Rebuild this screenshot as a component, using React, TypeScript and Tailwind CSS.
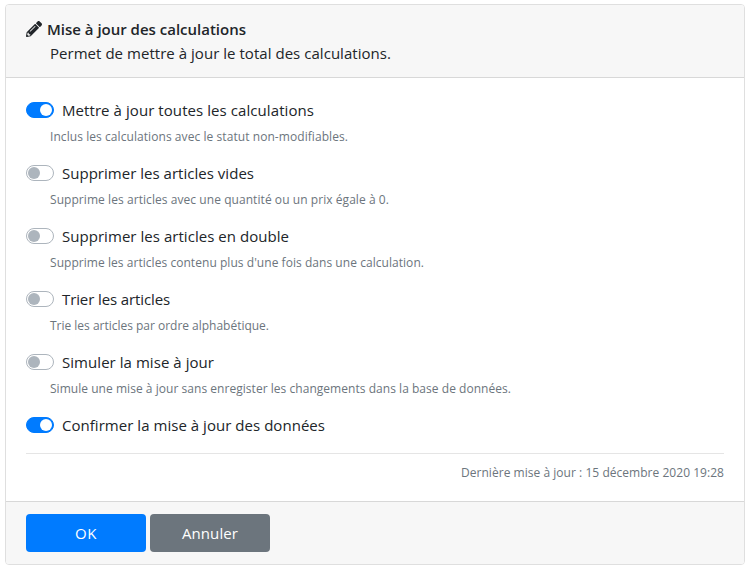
import React from "react";

type Option = { label: string; help?: string; on?: boolean; lw: number; hw?: number };

const options: Option[] = [
  { label: "Mettre à jour toutes les calculations", help: "Inclus les calculations avec le statut non-modifiables.", on: true, lw: 252, hw: 298 },
  { label: "Supprimer les articles vides", help: "Supprime les articles avec une quantité ou un prix égale à 0.", lw: 192, hw: 339 },
  { label: "Supprimer les articles en double", help: "Supprime les articles contenu plus d'une fois dans une calculation.", lw: 227, hw: 374 },
  { label: "Trier les articles", help: "Trie les articles par ordre alphabétique.", lw: 108, hw: 219 },
  { label: "Simuler la mise à jour", help: "Simule une mise à jour sans enregister les changements dans la base de données.", lw: 152, hw: 461 },
  { label: "Confirmer la mise à jour des données", on: true, lw: 263 },
];

/* One line of text fitted to a given width. */
function Fit({ children, width, className = "" }: { children: string; width: number; className?: string }) {
  const ref = React.useRef<HTMLSpanElement>(null);
  React.useLayoutEffect(() => {
    const el = ref.current;
    if (!el) return;
    el.style.letterSpacing = "0px";
    const natural = el.getBoundingClientRect().width;
    el.style.letterSpacing = `${(width - natural) / children.length}px`;
  }, [children, width]);
  return <span ref={ref} className={`inline-block whitespace-nowrap ${className}`}>{children}</span>;
}

function Switch({ on }: { on?: boolean }) {
  return (
    <span className={`flex h-4 w-7 shrink-0 items-center rounded-full border px-px ${on ? "justify-end border-[#007bff] bg-[#007bff]" : "border-[#adb5bd] bg-white"}`}>
      <span className={`size-3 rounded-full ${on ? "bg-white" : "bg-[#adb5bd]"}`} />
    </span>
  );
}

export default function App() {
  return (
    <div className="h-[570px] w-[750px] bg-white pt-1 pl-[5px] font-['Open_Sans','Noto_Sans',sans-serif] text-[#212529]">
      <div className="flex h-[561px] w-[740px] flex-col overflow-hidden rounded border border-[#dfdfdf] bg-white">
        <header className="h-[73px] border-b border-[#d8d8d8] bg-[#f7f7f7] px-5 pt-3">
          <div className="flex h-6 items-center">
            <svg viewBox="0 0 512 512" className="mr-[5px] size-4 fill-[#212529]">
              <path d="M497.9 142.1l-46.1 46.1c-4.7 4.7-12.3 4.7-17 0l-111-111c-4.7-4.7-4.7-12.3 0-17l46.1-46.1c18.7-18.7 49.1-18.7 67.9 0l60.1 60.1c18.8 18.7 18.8 49.1 0 67.9zM284.2 99.8L21.6 362.4.4 483.9c-2.9 16.4 11.4 30.6 27.8 27.8l121.5-21.3 262.6-262.6c4.7-4.7 4.7-12.3 0-17l-111-111c-4.8-4.7-12.4-4.7-17.1 0zM124.1 339.9c-5.5-5.5-5.5-14.3 0-19.8l154-154c5.5-5.5 14.3-5.5 19.8 0s5.5 14.3 0 19.8l-154 154c-5.5 5.5-14.3 5.5-19.8 0zM88 424h48v36.3l-64.5 11.3-31.1-31.1L51.7 376H88v48z" />
            </svg>
            <Fit width={199} className="text-[15px] leading-6 font-semibold">Mise à jour des calculations</Fit>
          </div>
          <div className="pl-6 text-[15px] leading-6"><Fit width={341}>Permet de mettre à jour le total des calculations.</Fit></div>
        </header>
        <main className="h-[423px] px-5 pt-5">
          {options.map((o) => (
            <div key={o.label} className="h-[63px]">
              <div className="flex h-6 items-center gap-2">
                <Switch on={o.on} />
                <Fit width={o.lw} className="text-[15px] leading-6">{o.label}</Fit>
              </div>
              {o.help && <div className="pt-[5px] pl-6 text-[12px] leading-5 text-[#6c757d]"><Fit width={o.hw!}>{o.help}</Fit></div>}
            </div>
          ))}
          <div className="-mt-[23px] border-t border-[#e5e5e5] pt-[9px] text-right text-[12px] leading-5 text-[#6c757d]">
            <Fit width={263}>Dernière mise à jour : 15 décembre 2020 19:28</Fit>
          </div>
        </main>
        <footer className="flex flex-1 gap-1 border-t border-[#d8d8d8] bg-[#f7f7f7] px-5 pt-3 text-[15px] text-white">
          <button className="flex h-[38px] w-[120px] items-center justify-center rounded bg-[#007bff]"><Fit width={22}>OK</Fit></button>
          <button className="flex h-[38px] w-[120px] items-center justify-center rounded bg-[#6c757d]"><Fit width={56}>Annuler</Fit></button>
        </footer>
      </div>
    </div>
  );
}
